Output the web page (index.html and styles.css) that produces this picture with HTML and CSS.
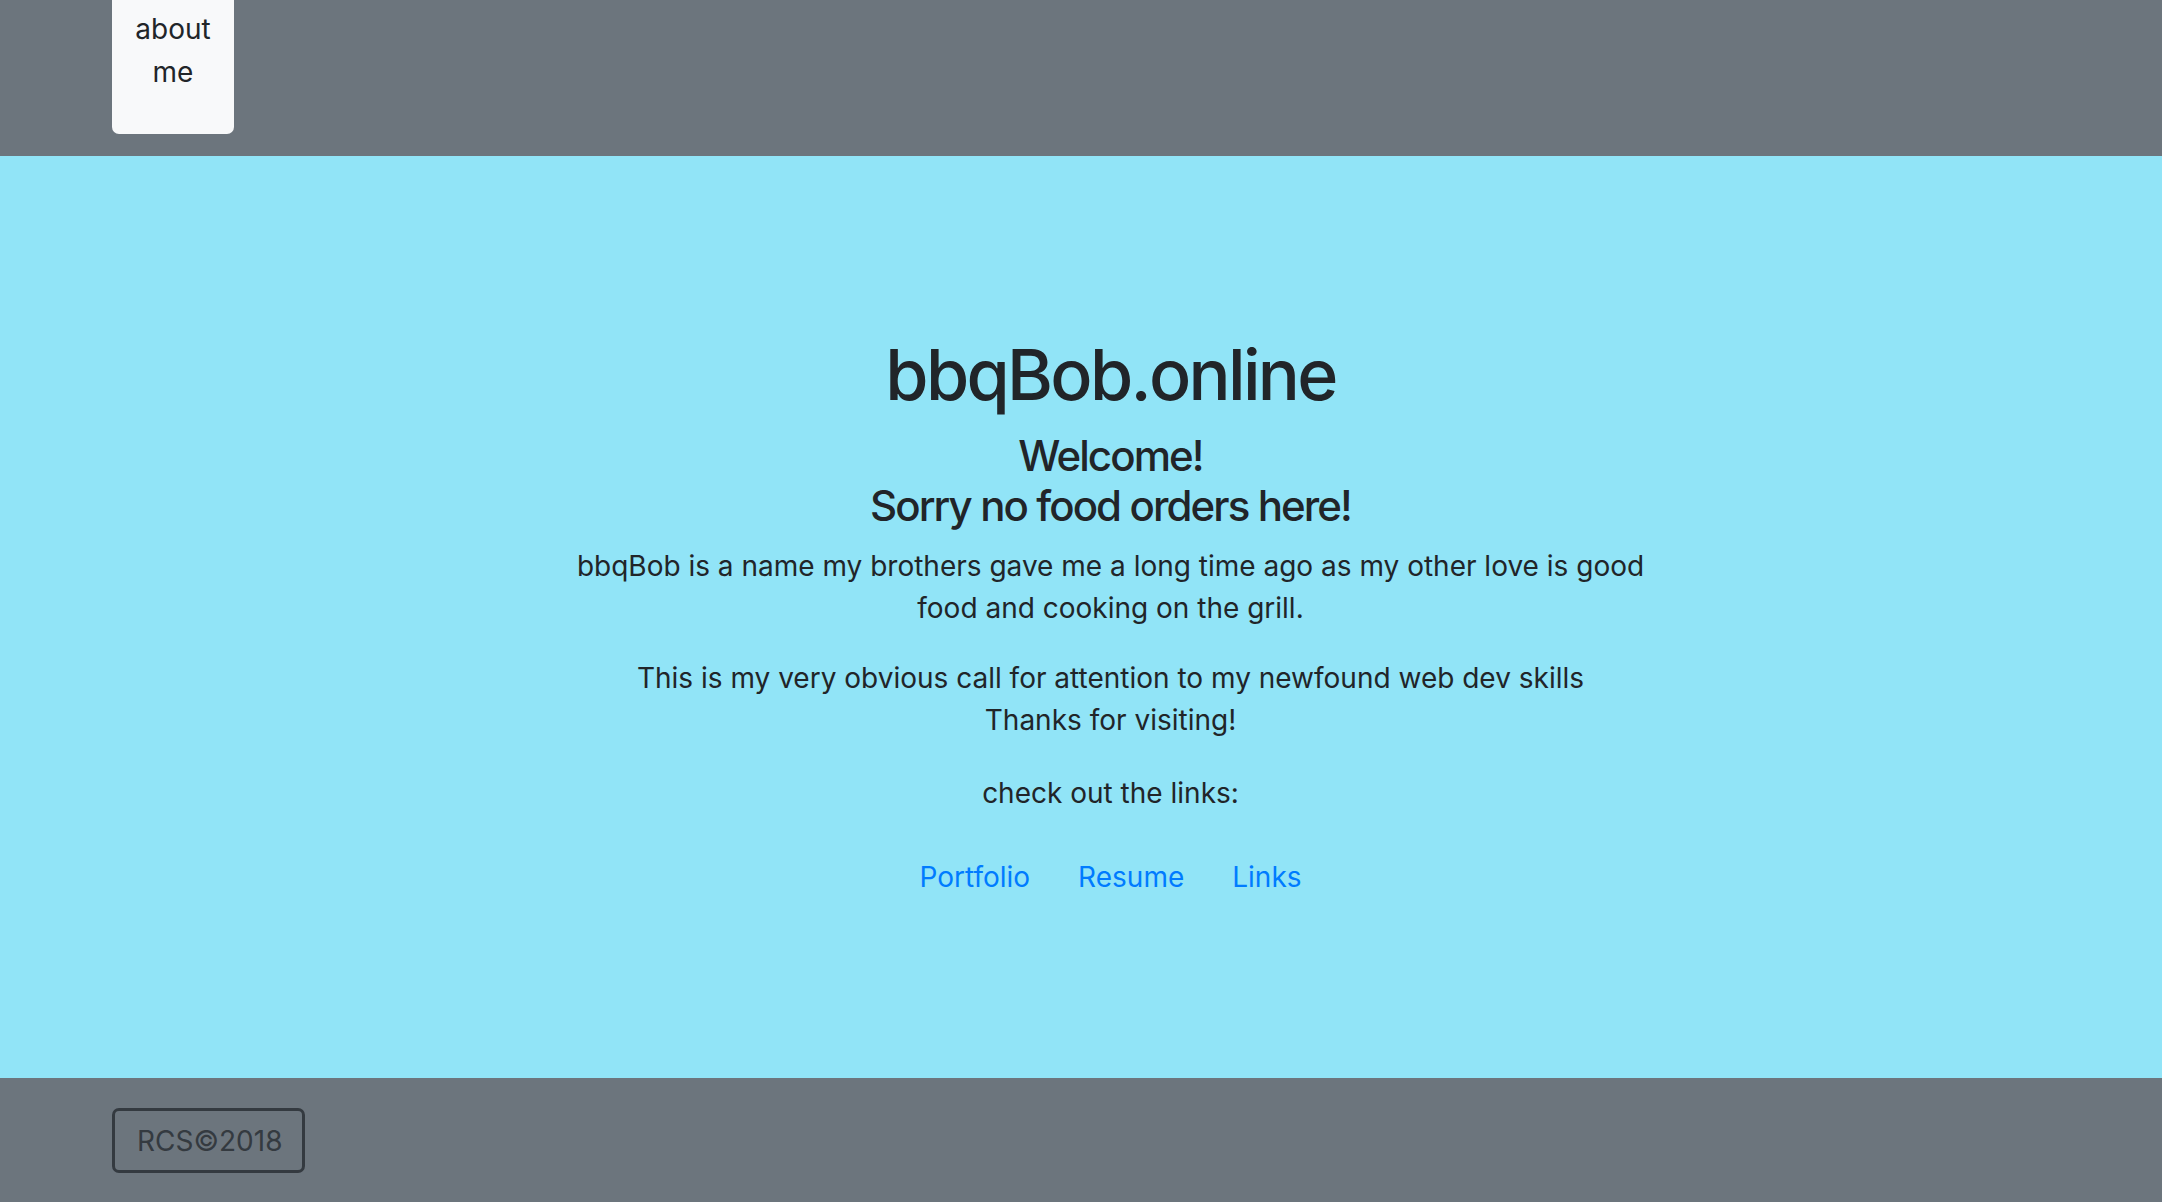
FILE: index.html
```html
<!DOCTYPE html>
<html>
<head>
<meta charset="utf-8">
<link rel="stylesheet" href="styles.css">
</head>
<body>
<header class="topbar">
  <div class="topbar-inner">
    <a class="about-btn" href="#">about me</a>
  </div>
</header>
<main class="hero">
  <div class="hero-col">
    <h1 class="title">bbqBob.online</h1>
    <h4 class="subtitle">Welcome!<br>Sorry no food orders here!</h4>
    <p class="text">bbqBob is a name my brothers gave me a long time ago as my other love is good food and cooking on the grill.</p>
    <p class="text">This is my very obvious call for attention to my newfound web dev skills<br>Thanks for visiting!</p>
    <p class="text check">check out the links:</p>
    <nav class="links">
      <a href="#">Portfolio</a>
      <a href="#">Resume</a>
      <a href="#">Links</a>
    </nav>
  </div>
</main>
<footer class="footbar">
  <div class="footbar-inner">
    <span class="copy">RCS©2018</span>
  </div>
</footer>
</body>
</html>
```
FILE: styles.css
```css
* { box-sizing: border-box; }
html, body { margin: 0; padding: 0; }
body {
  width: 2162px;
  height: 1202px;
  overflow: hidden;
  font-family: Inter, "Liberation Sans", sans-serif;
  font-size: 28px;
  line-height: 42px;
  color: #212529;
  display: flex;
  flex-direction: column;
}
.topbar {
  background: #6c757d;
  height: 156px;
  flex: none;
}
.topbar-inner { padding-left: 112px; }
.about-btn {
  display: block;
  width: 122px;
  height: 134px;
  padding-top: 8px;
  background: #f8f9fa;
  color: #212529;
  text-decoration: none;
  text-align: center;
  border-radius: 0 0 7px 7px;
  font-size: 28px;
  line-height: 43px;
  padding-left: 20px;
  padding-right: 20px;
}
.hero {
  background: #91e4f7;
  height: 922px;
  flex: none;
  padding-top: 177px;
}
.hero-col {
  width: 1111px;
  margin-left: 555px;
  text-align: center;
}
.title {
  margin: 0 0 14px;
  font-size: 70px;
  line-height: 84px;
  font-weight: 500;
  letter-spacing: -2.7px;
}
.subtitle {
  margin: 0 0 14px;
  font-size: 42px;
  line-height: 50px;
  font-weight: 500;
  letter-spacing: -1.9px;
}
.text { margin: 0 0 28px; }
.check { margin-top: 31px; }
.links {
  display: flex;
  justify-content: center;
  gap: 48px;
  padding-top: 14px;
}
.links a {
  color: #007bff;
  text-decoration: none;
}
.footbar {
  background: #6c757d;
  flex: 1;
  padding-top: 30px;
}
.footbar-inner { padding-left: 112px; }
.copy {
  display: inline-block;
  border: 3px solid #343a40;
  border-radius: 7px;
  color: #343a40;
  padding: 8px 22px;
  width: 193px;
  height: 65px;
  text-align: center;
  line-height: 44px;
}
```
